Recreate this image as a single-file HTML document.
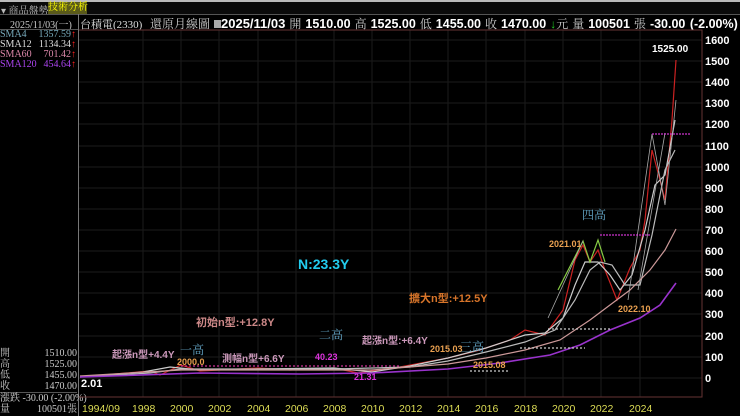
<!DOCTYPE html>
<html><head><meta charset="utf-8"><style>
html,body{margin:0;padding:0;background:#000;width:740px;height:416px;overflow:hidden}
body{position:relative;font-family:"Liberation Serif","Noto Serif CJK SC",serif;color:#ddd}
.a{position:absolute;white-space:nowrap}
.s{font-family:"Liberation Sans","Noto Sans CJK TC",sans-serif;font-weight:bold}
</style></head><body>
<div class="a" style="left:0;top:0;width:740px;height:2px;background:#bbb"></div>
<div class="a" style="left:0;top:2px;width:740px;height:12px;background:#0a0a0a"></div>
<div class="a" style="left:1px;top:2px;font-size:10px;color:#bbb">▾ 商品盤勢</div>
<div class="a" style="left:48px;top:2px;height:12px;width:39px;background:#5a5a1a;font-size:10px;line-height:12px;color:#ff0">技術分析</div>
<div class="a" style="left:0;top:14px;width:740px;height:1px;background:#555"></div>
<div class="a" style="left:10px;top:16px;font-size:10px;color:#ccc">2025/11/03(一)</div>
<div class="a" style="left:0;top:29px;width:78px;height:1px;background:#555"></div>
<div class="a" style="left:78px;top:14px;width:1px;height:402px;background:#777"></div>
<div class="a" style="left:80px;top:16px;font-size:11px;color:#ddd">台積電(2330)</div>
<div class="a" style="left:150px;top:15px;font-size:12px;color:#ccc;word-spacing:1px">還原月線圖 <span style="display:inline-block;width:7px;height:8px;background:#aaa"></span><span class="s" style="color:#fff;font-size:13px">2025/11/03</span> 開 <span class="s" style="color:#fff;font-size:12.5px">1510.00</span> 高 <span class="s" style="color:#fff;font-size:12.5px">1525.00</span> 低 <span class="s" style="color:#fff;font-size:12.5px">1455.00</span> 收 <span class="s" style="color:#fff;font-size:12.5px">1470.00</span> <span style="color:#2c2">↓</span>元 量 <span class="s" style="color:#fff;font-size:12.5px">100501</span> 張 <span class="s" style="color:#fff;font-size:12.5px">-30.00 (-2.00%)</span></div>
<div class="a" style="left:0;top:30px;width:76px;font-size:10px;line-height:10px">
<div style="color:#7ab">SMA4<span style="float:right">1357.59<span style="color:#f22">↑</span></span></div>
<div style="color:#ddd">SMA12<span style="float:right">1134.34<span style="color:#f22">↑</span></span></div>
<div style="color:#d8a">SMA60<span style="float:right">701.42<span style="color:#f22">↑</span></span></div>
<div style="color:#a4e">SMA120<span style="float:right">454.64<span style="color:#f22">↑</span></span></div>
</div>
<div class="a" style="left:0;top:348px;width:77px;font-size:10px;line-height:11px;color:#ccc">
<div>開<span style="float:right">1510.00</span></div>
<div>高<span style="float:right">1525.00</span></div>
<div>低<span style="float:right">1455.00</span></div>
<div>收<span style="float:right">1470.00</span></div>
<div style="border-top:1px solid #555">漲跌 -30.00 (-2.00%)</div>
<div>量<span style="float:right">100501張</span></div>
</div>
<svg class="a" style="left:0;top:0" width="740" height="416" font-family="Liberation Sans, Noto Sans CJK TC, sans-serif" font-weight="bold">
<g stroke="#1b1b1b" stroke-width="1">
<path d="M79 40H702M79 61H702M79 82H702M79 103H702M79 124H702M79 146H702M79 167H702M79 188H702M79 209H702M79 230H702M79 251H702M79 272H702M79 293H702M79 314H702M79 336H702M79 357H702M79 378H702"/>
<path d="M143 30V397M181 30V397M219 30V397M258 30V397M296 30V397M334 30V397M372 30V397M410 30V397M448 30V397M486 30V397M525 30V397M563 30V397M601 30V397M640 30V397"/>
</g>
<path d="M79 30H702V397H79" fill="none" stroke="#633" stroke-width="1"/>
<g fill="#fff" font-size="11">
<text x="705" y="44">1600</text><text x="705" y="65">1500</text><text x="705" y="86">1400</text><text x="705" y="107">1300</text><text x="705" y="128">1200</text><text x="705" y="150">1100</text><text x="705" y="171">1000</text><text x="705" y="192">900</text><text x="705" y="213">800</text><text x="705" y="234">700</text><text x="705" y="255">600</text><text x="705" y="276">500</text><text x="705" y="297">400</text><text x="705" y="318">300</text><text x="705" y="340">200</text><text x="705" y="361">100</text><text x="705" y="382">0</text>
</g>
<g fill="#dd5" font-size="10.5" font-weight="normal" font-family="Liberation Sans, sans-serif">
<text x="82" y="412">1994/09</text><text x="132" y="412">1998</text><text x="170" y="412">2000</text><text x="208" y="412">2002</text><text x="247" y="412">2004</text><text x="285" y="412">2006</text><text x="323" y="412">2008</text><text x="361" y="412">2010</text><text x="399" y="412">2012</text><text x="437" y="412">2014</text><text x="475" y="412">2016</text><text x="514" y="412">2018</text><text x="552" y="412">2020</text><text x="590" y="412">2022</text><text x="629" y="412">2024</text>
</g>
<g fill="none" stroke-width="1.2">
<path d="M80 377L150 371L160 375L181 365L200 371L258 368L290 370L334 368L358 373L400 367L448 358L480 350L510 340L525 330L545 335L563 310L575 260L583 245L590 262L598 250L605 270L617 300L630 268L640 250L645 220L652 150L660 180L665 200L672 120L676 60" stroke="#c22"/>
<path d="M80 377L143 372L170 367L200 370L258 369L334 368L372 372L410 366L448 358L486 348L525 335L545 333L563 318L575 285L585 262L598 262L610 275L620 290L632 275L645 230L655 185L665 175L675 120" stroke="#ccc"/>
<path d="M80 377L150 373L181 369L258 369L334 369L410 367L448 361L486 352L525 342L555 330L575 300L590 270L600 262L612 265L625 285L640 285L652 235L665 170L675 150" stroke="#bbb"/>
<path d="M80 376L181 370L300 370L372 370L448 364L486 358L525 350L560 340L590 320L610 305L630 290L650 270L665 250L676 229" stroke="#c99"/>
<path d="M80 377L200 373L300 374L372 373L448 369L500 363L550 355L580 345L610 330L640 318L660 305L676 283" stroke="#93c" stroke-width="1.6"/>
<path d="M558 290L583 241L590 262L598 240L605 262" stroke="#8c4"/>
<path d="M548 318L583 241M628 300L652 134L665 205L676 100M638 290L665 133" stroke="#aaa" stroke-width="0.8"/>
<path d="M181 366H400" stroke="#c39" stroke-dasharray="2 2"/>
<path d="M600 235H650M652 134H690" stroke="#c3c" stroke-dasharray="2 1"/>
<path d="M548 329H610M520 348H585M470 371H510" stroke="#ccc" stroke-dasharray="2 2"/>
</g>
<g font-size="9">
<text x="652" y="52" fill="#fff" font-size="10">1525.00</text>
<text x="549" y="247" fill="#e9a050">2021.01</text>
<text x="618" y="312" fill="#e9a050">2022.10</text>
<text x="430" y="352" fill="#e9a050">2015.03</text>
<text x="473" y="368" fill="#e9a050">2015.08</text>
<text x="177" y="365" fill="#e9a050">2000.0</text>
<text x="315" y="360" fill="#d3d">40.23</text>
<text x="354" y="380" fill="#d3d">21.31</text>
<text x="81" y="387" fill="#fff" font-size="11">2.01</text>
<text x="298" y="269" fill="#2ce" font-size="14">N:23.3Y</text>
<text x="409" y="302" fill="#d8752a" font-size="11">擴大n型:+12.5Y</text>
<text x="196" y="326" fill="#c88" font-size="11">初始n型:+12.8Y</text>
<text x="362" y="344" fill="#c9b" font-size="10">起漲n型:+6.4Y</text>
<text x="112" y="358" fill="#c9b" font-size="10">起漲n型+4.4Y</text>
<text x="222" y="362" fill="#c9b" font-size="10">測幅n型+6.6Y</text>
</g>
<g fill="#6ac" font-size="12" font-weight="normal" font-family="Liberation Serif, Noto Serif CJK SC, serif">
<text x="582" y="219">四高</text><text x="319" y="339">二高</text><text x="460" y="351">三高</text><text x="180" y="354">一高</text>
</g>
</svg>
</body></html>
